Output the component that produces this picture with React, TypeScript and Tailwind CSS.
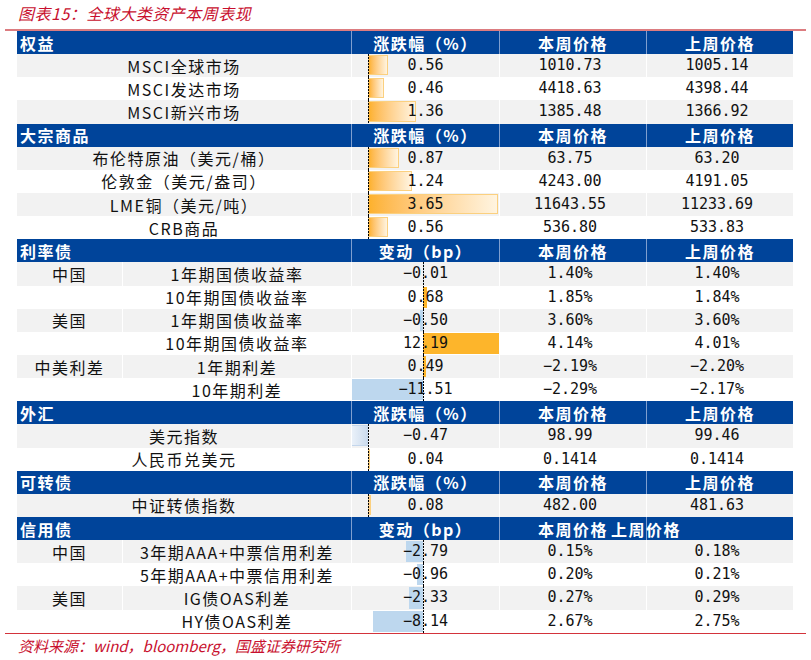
import React from 'react';

type Row = { group?: string; label: string; chg: number; cur: string; prev: string };
type Section = {
  title: string;
  chgHead: string;
  kind: 'pct' | 'bp';
  split?: boolean;
  merged?: boolean;
  rows: Row[];
};

const SECTIONS: Section[] = [
  {
    title: '权益',
    chgHead: '涨跌幅（%）',
    kind: 'pct',
    rows: [
      { label: 'MSCI全球市场', chg: 0.56, cur: '1010.73', prev: '1005.14' },
      { label: 'MSCI发达市场', chg: 0.46, cur: '4418.63', prev: '4398.44' },
      { label: 'MSCI新兴市场', chg: 1.36, cur: '1385.48', prev: '1366.92' },
    ],
  },
  {
    title: '大宗商品',
    chgHead: '涨跌幅（%）',
    kind: 'pct',
    rows: [
      { label: '布伦特原油（美元/桶）', chg: 0.87, cur: '63.75', prev: '63.20' },
      { label: '伦敦金（美元/盎司）', chg: 1.24, cur: '4243.00', prev: '4191.05' },
      { label: 'LME铜（美元/吨）', chg: 3.65, cur: '11643.55', prev: '11233.69' },
      { label: 'CRB商品', chg: 0.56, cur: '536.80', prev: '533.83' },
    ],
  },
  {
    title: '利率债',
    chgHead: '变动（bp）',
    kind: 'bp',
    split: true,
    rows: [
      { group: '中国', label: '1年期国债收益率', chg: -0.01, cur: '1.40%', prev: '1.40%' },
      { label: '10年期国债收益率', chg: 0.68, cur: '1.85%', prev: '1.84%' },
      { group: '美国', label: '1年期国债收益率', chg: -0.5, cur: '3.60%', prev: '3.60%' },
      { label: '10年期国债收益率', chg: 12.19, cur: '4.14%', prev: '4.01%' },
      { group: '中美利差', label: '1年期利差', chg: 0.49, cur: '−2.19%', prev: '−2.20%' },
      { label: '10年期利差', chg: -11.51, cur: '−2.29%', prev: '−2.17%' },
    ],
  },
  {
    title: '外汇',
    chgHead: '涨跌幅（%）',
    kind: 'pct',
    rows: [
      { label: '美元指数', chg: -0.47, cur: '98.99', prev: '99.46' },
      { label: '人民币兑美元', chg: 0.04, cur: '0.1414', prev: '0.1414' },
    ],
  },
  {
    title: '可转债',
    chgHead: '涨跌幅（%）',
    kind: 'pct',
    rows: [{ label: '中证转债指数', chg: 0.08, cur: '482.00', prev: '481.63' }],
  },
  {
    title: '信用债',
    chgHead: '变动（bp）',
    kind: 'bp',
    split: true,
    merged: true,
    rows: [
      { group: '中国', label: '3年期AAA+中票信用利差', chg: -2.79, cur: '0.15%', prev: '0.18%' },
      { label: '5年期AAA+中票信用利差', chg: -0.96, cur: '0.20%', prev: '0.21%' },
      { group: '美国', label: 'IG债OAS利差', chg: -2.33, cur: '0.27%', prev: '0.29%' },
      { label: 'HY债OAS利差', chg: -8.14, cur: '2.67%', prev: '2.75%' },
    ],
  },
];

const cjk = "font-['Noto_Sans_CJK_SC',sans-serif]";
const num = "font-['DejaVu_Sans_Mono','Noto_Sans_CJK_SC',monospace]";
const cols = 'grid grid-cols-[334px_148px_147px_147px]';

function fmt(v: number) {
  const s = Math.abs(v).toFixed(2);
  return v < 0 ? '−' + s : s;
}

function BarCell({ v, kind }: { v: number; kind: 'pct' | 'bp' }) {
  const axis = kind === 'pct' ? 16 : 71;
  const w = Math.abs(v) * (kind === 'pct' ? 35.6 : 6.2);
  const left = v >= 0 ? axis : axis - w;

  let barCls = '';
  if (kind === 'pct') {
    barCls =
      v >= 0
        ? 'top-[1px] bottom-[2px] border border-[#fbd07f] bg-linear-to-r from-[#fdb12b] to-[#fff4e0]'
        : 'top-[1px] bottom-[2px] border border-[#c3d6ec] bg-linear-to-r from-[#eaf1f9] to-[#cddcee]';
  } else {
    barCls = v >= 0 ? 'top-[1px] bottom-[1px] bg-[#fdb52b]' : 'top-[1px] bottom-[1px] bg-[#bdd7ee]';
  }

  return (
    <div className="relative overflow-hidden border-l border-white flex items-center justify-center">
      <div className={`absolute ${barCls}`} style={{ left, width: Math.max(w, 1) }} />
      <span className={`relative text-[15px] text-[#111] ${num}`}>{fmt(v)}</span>
      <div
        className="absolute top-0 bottom-0 w-px bg-[repeating-linear-gradient(to_bottom,#000_0,#000_2px,transparent_2px,transparent_3px)]"
        style={{ left: axis }}
      />
    </div>
  );
}

function HeaderRow({ s }: { s: Section }) {
  return (
    <div className={`${cols} h-[23.15px] bg-[#00449a] text-white font-bold text-[16px] leading-none ${cjk}`}>
      <div className="flex items-center pl-[3px] tracking-[1.5px]">{s.title}</div>
      <div className="flex items-center justify-center border-l border-[#7f9fcf] tracking-[1.5px]">{s.chgHead}</div>
      {s.merged ? (
        <>
          <div className="relative z-10 flex items-center pl-[38px] border-l border-[#7f9fcf] whitespace-nowrap tracking-[1.5px]">
            本周价格<span className="ml-[3px]">上周价格</span>
          </div>
          <div className="border-l border-[#7f9fcf]" />
        </>
      ) : (
        <>
          <div className="flex items-center justify-center border-l border-[#7f9fcf] tracking-[1.5px]">本周价格</div>
          <div className="flex items-center justify-center border-l border-[#7f9fcf] tracking-[1.5px]">上周价格</div>
        </>
      )}
    </div>
  );
}

function DataRow({ s, r, i }: { s: Section; r: Row; i: number }) {
  const bg = i % 2 === 0 ? 'bg-[#f2f2f2]' : 'bg-white';
  return (
    <div className={`${cols} h-[23.15px] ${bg} text-[#111] leading-none`}>
      {s.split ? (
        <div className={`grid grid-cols-[106px_228px] text-[16px] tracking-[1.5px] ${cjk}`}>
          <div className="flex items-center justify-center border-r border-white">{r.group}</div>
          <div className="flex items-center justify-center">{r.label}</div>
        </div>
      ) : (
        <div className={`flex items-center justify-center text-[16px] tracking-[1.5px] ${cjk}`}>{r.label}</div>
      )}
      <BarCell v={r.chg} kind={s.kind} />
      <div className={`flex items-center justify-center border-l border-white text-[15px] pr-[6px] ${num}`}>{r.cur}</div>
      <div className={`flex items-center justify-center border-l border-white text-[15px] pr-[6px] ${num}`}>{r.prev}</div>
    </div>
  );
}

export default function App() {
  return (
    <div className="w-[811px] h-[660px] bg-white overflow-hidden">
      <div className={`h-[29px] pl-[18px] pt-[3px] text-[16px] italic leading-[20px] text-[#c8102e] tracking-[0.5px] ${cjk}`}>
        图表15：全球大类资产本周表现
      </div>
      <div className="mx-[5px] h-[2px] bg-[#dc7c80]" />

      <div className="ml-[17px] w-[776px]">
        {SECTIONS.map(s => (
          <div key={s.title}>
            <HeaderRow s={s} />
            {s.rows.map((r, i) => (
              <DataRow key={r.label + i} s={s} r={r} i={i} />
            ))}
          </div>
        ))}
      </div>

      <div className="mx-[5px] h-[1px] bg-[#d3333b]" />
      <div className={`pl-[18px] pt-[3px] text-[15px] italic leading-[18px] text-[#c8102e] ${cjk}`}>
        资料来源：wind，bloomberg，国盛证券研究所
      </div>
    </div>
  );
}
